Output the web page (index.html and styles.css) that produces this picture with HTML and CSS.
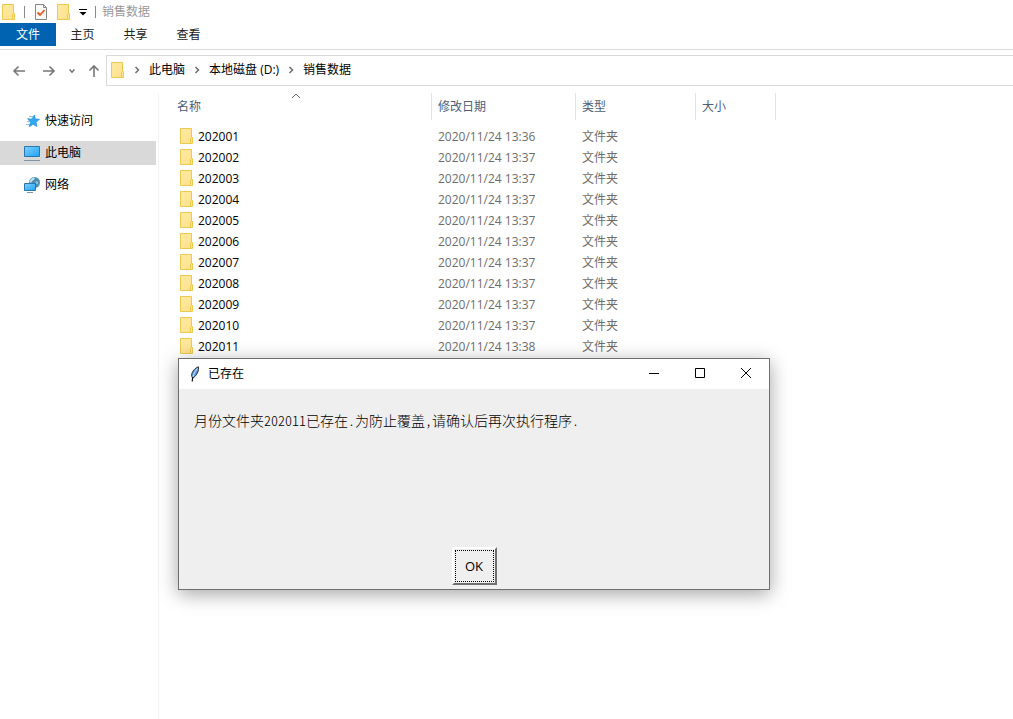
FILE: index.html
```html
<!DOCTYPE html>
<html lang="zh-CN">
<head>
    <meta charset="UTF-8">
    <meta name="viewport" content="width=device-width, initial-scale=1.0">
    <title>销售数据</title>
    <link rel="stylesheet" href="styles.css">
</head>
<body>
    <svg class="defs" aria-hidden="true">
        <defs>
            <linearGradient id="yellow" x1="0" y1="0" x2="1" y2="1">
                <stop offset="0" stop-color="#ffeba4"/>
                <stop offset="1" stop-color="#ffe08a"/>
            </linearGradient>
            <linearGradient id="blue" x1="0" y1="0" x2="1" y2="1">
                <stop offset="0" stop-color="#7fd0ff"/>
                <stop offset="1" stop-color="#1fa2f5"/>
            </linearGradient>
        </defs>
        <symbol id="folder" viewBox="0 0 14 16">
            <path d="M.5 .5h11v15H.5z" fill="url(#yellow)" stroke="#ecc94f"/>
            <path d="M10.500 15.500v-5l1-1h1v6z" fill="#ffe797" stroke="#ecc94f"/>
        </symbol>
        <symbol id="chevron" viewBox="0 0 6 8">
            <path d="M1.500 1l3 3-3 3" fill="none" stroke="#6e6e6e" stroke-width="1.500"/>
        </symbol>
    </svg>

    <div class="explorer">
        <header class="titlebar">
            <svg class="folder"><use href="#folder"/></svg>
            <span class="divider"></span>
            <button class="quick" aria-label="属性">
                <svg width="12" height="16" viewBox="0 0 12 16">
                    <path d="M.5 .5h8l3 3v12H.5z" fill="#f7f9fb" stroke="#868686"/>
                    <path d="M8.500 .5v3h3" fill="none" stroke="#868686"/>
                    <path d="M2.500 8.500l2.500 2.500 4.500-5" fill="none" stroke="#e8581c" stroke-width="1.800"/>
                </svg>
            </button>
            <button class="quick" aria-label="新建文件夹"><svg class="folder"><use href="#folder"/></svg></button>
            <button class="quick" aria-label="自定义快速访问工具栏">
                <svg width="8" height="8" viewBox="0 0 8 8">
                    <path d="M0 1.500h8" stroke="#000"/>
                    <path d="M0.500 4h7L4 7.500z"/>
                </svg>
            </button>
            <span class="divider"></span>
            <span class="window-title">销售数据</span>
        </header>

        <nav class="tabs">
            <button class="tab active">文件</button>
            <button class="tab">主页</button>
            <button class="tab">共享</button>
            <button class="tab">查看</button>
        </nav>

        <div class="navbar">
            <div class="arrows">
                <button aria-label="后退">
                    <svg width="14" height="12" viewBox="0 0 14 12"><path d="M13 6H2M6.500 1.500L2 6l4.500 4.500"/></svg>
                </button>
                <button aria-label="前进">
                    <svg width="14" height="12" viewBox="0 0 14 12"><path d="M1 6h11M7.500 1.500L12 6l-4.500 4.500"/></svg>
                </button>
                <button aria-label="最近位置">
                    <svg width="8" height="6" viewBox="0 0 8 6"><path d="M1.500 1.500L4 4l2.500-2.500"/></svg>
                </button>
                <button aria-label="上移">
                    <svg width="12" height="14" viewBox="0 0 12 14"><path d="M6 13V2M1.500 6.500L6 2l4.500 4.500"/></svg>
                </button>
            </div>
            <div class="address">
                <svg class="folder"><use href="#folder"/></svg>
                <svg class="chevron"><use href="#chevron"/></svg>
                <a href="#">此电脑</a>
                <svg class="chevron"><use href="#chevron"/></svg>
                <a href="#">本地磁盘 (D:)</a>
                <svg class="chevron"><use href="#chevron"/></svg>
                <a href="#">销售数据</a>
            </div>
        </div>

        <div class="content">
            <aside class="sidebar">
                <a class="place" href="#">
                    <svg width="18" height="16" viewBox="0 0 18 16">
                        <path d="M11.500 2l.8 4 4.200.3-3.500 2.700.8 4.500-3.600-2.300-4 2.600 1.300-4.800-2.500-2.600 4-.4z" fill="#2fa8f6" stroke="#2a8fd8" stroke-width=".8"/>
                        <path d="M6 3.500h4M4 5.500h3M4 8.500h3M3 11.500h3" stroke="#7cc4f2"/>
                    </svg>
                    快速访问
                </a>
                <a class="place selected" href="#">
                    <svg width="18" height="16" viewBox="0 0 18 16">
                        <path d="M1.500 1.500h15v10h-15z" fill="url(#blue)" stroke="#2878ae"/>
                        <path d="M6 12.500h6" stroke="#c4d8e6"/>
                        <path d="M1 15.500h16" stroke="#8296ab"/>
                    </svg>
                    此电脑
                </a>
                <a class="place" href="#">
                    <svg width="18" height="16" viewBox="0 0 18 16">
                        <circle cx="11.500" cy="5.500" r="5.500" fill="#4c8db2"/>
                        <path d="M7.500 2.500c1.500-1.500 3-2 4.500-1.500l-1 2-2 1-1 2-1.500-1z" fill="#b9e2ee"/>
                        <path d="M13 4l2.500 1-1 2.500-2-1z" fill="#8cc4dc"/>
                        <path d="M1.500 6.500h11v7h-11z" fill="url(#blue)" stroke="#2878ae"/>
                        <path d="M4 15.500h6" stroke="#7f98ad"/>
                    </svg>
                    网络
                </a>
            </aside>

            <main class="files">
                <table>
                    <colgroup>
                        <col class="col-name">
                        <col class="col-date">
                        <col class="col-type">
                        <col class="col-size">
                    </colgroup>
                    <thead>
                        <tr>
                            <th class="sorted">名称
                                <svg class="sort" viewBox="0 0 10 6"><path d="M1 5l4-4 4 4" fill="none" stroke="#666"/></svg>
                            </th>
                            <th>修改日期</th>
                            <th>类型</th>
                            <th>大小</th>
                        </tr>
                    </thead>
                    <tbody>
                        <tr><td><svg class="folder"><use href="#folder"/></svg>202001</td><td>2020/11/24 13:36</td><td>文件夹</td><td></td></tr>
                        <tr><td><svg class="folder"><use href="#folder"/></svg>202002</td><td>2020/11/24 13:37</td><td>文件夹</td><td></td></tr>
                        <tr><td><svg class="folder"><use href="#folder"/></svg>202003</td><td>2020/11/24 13:37</td><td>文件夹</td><td></td></tr>
                        <tr><td><svg class="folder"><use href="#folder"/></svg>202004</td><td>2020/11/24 13:37</td><td>文件夹</td><td></td></tr>
                        <tr><td><svg class="folder"><use href="#folder"/></svg>202005</td><td>2020/11/24 13:37</td><td>文件夹</td><td></td></tr>
                        <tr><td><svg class="folder"><use href="#folder"/></svg>202006</td><td>2020/11/24 13:37</td><td>文件夹</td><td></td></tr>
                        <tr><td><svg class="folder"><use href="#folder"/></svg>202007</td><td>2020/11/24 13:37</td><td>文件夹</td><td></td></tr>
                        <tr><td><svg class="folder"><use href="#folder"/></svg>202008</td><td>2020/11/24 13:37</td><td>文件夹</td><td></td></tr>
                        <tr><td><svg class="folder"><use href="#folder"/></svg>202009</td><td>2020/11/24 13:37</td><td>文件夹</td><td></td></tr>
                        <tr><td><svg class="folder"><use href="#folder"/></svg>202010</td><td>2020/11/24 13:37</td><td>文件夹</td><td></td></tr>
                        <tr><td><svg class="folder"><use href="#folder"/></svg>202011</td><td>2020/11/24 13:38</td><td>文件夹</td><td></td></tr>
                    </tbody>
                </table>
            </main>
        </div>
    </div>

    <div class="dialog" role="dialog" aria-labelledby="dialog-title">
        <div class="dialog-bar">
            <!-- Tk feather -->
            <svg width="12" height="16" viewBox="0 0 12 16">
                <path d="M9.500 .8C6.500 1.500 3 5 2.500 9.500l1 2.500L6 10.500c2.500-3 4-6 3.500-9.700z" fill="#5b9be6" stroke="#222" stroke-width=".9"/>
                <path d="M8.500 2.500C6 5 4.800 7.500 4 11" fill="none" stroke="#d3e8fc"/>
                <path d="M4 11c-.5 1.500-.8 3-.8 4.500" fill="none" stroke="#111" stroke-width="1.200"/>
            </svg>
            <span id="dialog-title">已存在</span>
            <div class="controls">
                <button aria-label="最小化"><svg width="12" height="12" viewBox="0 0 12 12"><path d="M1 5.500h10"/></svg></button>
                <button aria-label="最大化"><svg width="12" height="12" viewBox="0 0 12 12"><path d="M1.500 .5h9v9h-9z"/></svg></button>
                <button aria-label="关闭"><svg width="12" height="12" viewBox="0 0 12 12"><path d="M1 0l10 10M11 0L1 10"/></svg></button>
            </div>
        </div>
        <p class="message">月份文件夹202011已存在.为防止覆盖,请确认后再次执行程序.</p>
        <div class="actions">
            <button class="ok"><span>OK</span></button>
        </div>
    </div>
</body>
</html>
```
FILE: styles.css
```css
* {
    box-sizing: border-box;
}

body {
    margin: 0;
    background-color: #fff;
    color: #000;
    font-family: "Open Sans", "Noto Sans CJK SC", sans-serif;
    font-size: 12px;
    line-height: 20px;
}

button {
    font: inherit;
    color: inherit;
    background: none;
    border: none;
    padding: 0;
}

a {
    color: inherit;
    text-decoration: none;
}

svg {
    flex: none;
}

.defs {
    position: absolute;
    width: 0;
    height: 0;
}

.folder {
    width: 14px;
    height: 16px;
}

.explorer {
    display: flex;
    flex-direction: column;
    height: 100vh;
    overflow: hidden;
}

/* title bar and ribbon tabs */
.titlebar {
    display: flex;
    align-items: center;
    gap: 8px;
    height: 23px;
    padding-left: 2px;
}

.quick {
    display: flex;
    align-items: center;
}

.divider {
    width: 1px;
    height: 12px;
    background-color: #8a8a8a;
}

.divider + .quick {
    margin: 0 2px;
}

.window-title {
    color: #999;
}

.quick + .divider {
    margin-right: -2px;
}

.tabs {
    display: flex;
    height: 27px;
    padding-bottom: 3px;
    border-bottom: 1px solid #dadbdc;
}

.tab {
    width: 53px;
    color: #222;
}

.tab.active {
    width: 56px;
    background-color: #0063b1;
    color: #fff;
}

/* navigation row */
.navbar {
    display: flex;
    padding-top: 5px;
}

.arrows {
    display: flex;
    align-items: center;
    width: 106px;
    padding-left: 12px;
    gap: 12px;
}

.arrows button {
    display: flex;
}

.arrows button:nth-child(2) {
    margin-left: 4px;
}

.arrows path {
    fill: none;
    stroke: #777;
    stroke-width: 1.6;
}

.address {
    flex: 1;
    display: flex;
    align-items: center;
    gap: 9px;
    height: 31px;
    padding: 0 0 2px 4px;
    border: 1px solid #d9d9d9;
    border-right: none;
}

.chevron {
    width: 6px;
    height: 8px;
}

/* sidebar and file list */
.content {
    flex: 1;
    display: flex;
    padding-top: 7px;
}

.sidebar {
    width: 159px;
    padding: 16px 2px 0 0;
    border-right: 1px solid #f2f2f2;
}

.place {
    display: flex;
    align-items: center;
    gap: 4px;
    height: 24px;
    margin-bottom: 8px;
    padding-left: 23px;
}

.place.selected {
    background-color: #d9d9d9;
}

.files {
    flex: 1;
    padding-left: 12px;
}

table {
    table-layout: fixed;
    width: 605px;
    border-collapse: separate;
    border-spacing: 0;
}

.col-name {
    width: 261px;
}

.col-date {
    width: 144px;
}

.col-type {
    width: 120px;
}

.col-size {
    width: 80px;
}

th {
    height: 27px;
    padding: 0 6px;
    border-right: 1px solid #e2e2e2;
    color: #4c607a;
    font-weight: normal;
    text-align: left;
}

.sorted {
    position: relative;
}

.sort {
    position: absolute;
    top: 0;
    right: 50%;
    width: 10px;
    height: 6px;
}

td {
    height: 21px;
    padding: 0 6px;
    color: #6d6d6d;
}

td:first-child {
    padding-left: 9px;
    color: #000;
}

td .folder {
    margin: 0 4px 2px 0;
    vertical-align: middle;
}

tbody::before {
    content: "";
    display: block;
    height: 6px;
}

/* message window */
.dialog {
    position: absolute;
    top: 358px;
    left: 178px;
    width: 592px;
    background-color: #efefef;
    border: 1px solid #6f6f6f;
    box-shadow: 0 4px 18px rgba(0, 0, 0, 0.36);
}

.dialog-bar {
    display: flex;
    align-items: center;
    gap: 7px;
    height: 30px;
    padding-left: 10px;
    background-color: #fff;
}

.controls {
    display: flex;
    align-self: stretch;
    margin-left: auto;
}

.controls button {
    display: flex;
    align-items: center;
    justify-content: center;
    width: 46px;
}

.controls path {
    fill: none;
    stroke: #000;
}

.message {
    margin: 0;
    padding: 21px 15px 0;
    font-family: "Noto Sans CJK SC", sans-serif;
    font-size: 14px;
    font-weight: 300;
    font-feature-settings: "hwid";
}

.actions {
    display: flex;
    justify-content: center;
    padding: 117px 0 4px;
}

.ok {
    width: 45px;
    height: 38px;
    padding: 1px;
    background-color: #efefef;
    border: 2px solid;
    border-color: #fff #6f6f6f #6f6f6f #fff;
    font-size: 13px;
}

.ok span {
    display: flex;
    align-items: center;
    justify-content: center;
    height: 100%;
    border: 1px dotted #000;
}
```
